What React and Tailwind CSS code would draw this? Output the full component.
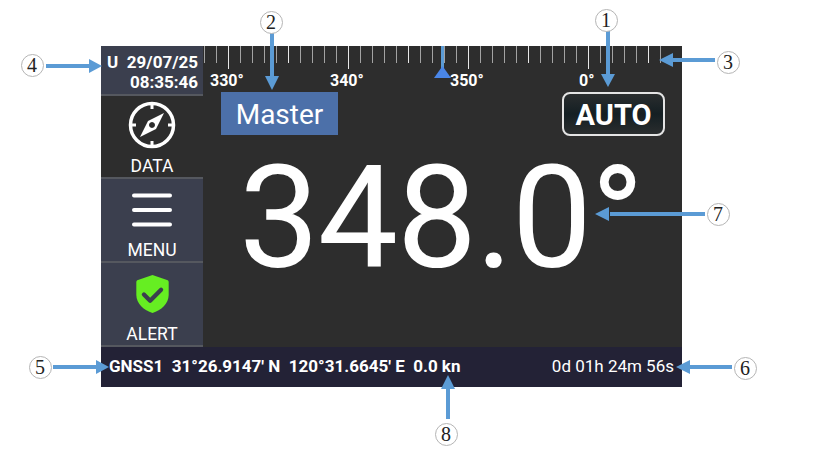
const ticks = Array.from({ length: 39 }, (_, i) => 204 + i * 12 - 203);

const scaleLabels = [
  { text: "330°", left: 7 },
  { text: "340°", left: 127 },
  { text: "350°", left: 247 },
  { text: "0°", left: 376 },
];

function Ruler() {
  return (
    <div className="relative h-[46px] shrink-0">
      <svg width="479" height="46" className="absolute left-0 top-0">
        {ticks.map((x, i) => {
          const major = (i - 2) % 10 === 0;
          const mid = (i - 2) % 5 === 0;
          return (
            <line
              key={x}
              x1={x + 0.5}
              x2={x + 0.5}
              y1="0"
              y2={major ? 23 : 17}
              stroke={major || mid ? "#e8e8e8" : "#a3a3a3"}
              strokeWidth="1"
            />
          );
        })}
        <line x1="239.5" x2="239.5" y1="0" y2="24" stroke="#5b9bd5" strokeWidth="3" />
        <path d="M239.5 20 L248 32 L231 32 Z" fill="#4a86e8" />
      </svg>
      {scaleLabels.map((l) => (
        <span
          key={l.text}
          className="absolute top-[25px] text-[16px] leading-[20px] font-bold text-white"
          style={{ left: l.left }}
        >
          {l.text}
        </span>
      ))}
    </div>
  );
}

function NavItem({ label, children, className, iconBox = "h-[60px]" }) {
  return (
    <div className={`${className} flex flex-col items-center border-b-2 border-[#55585f]`}>
      <div className={`${iconBox} w-full flex items-center justify-center`}>{children}</div>
      <span className="text-[17.5px] leading-[20px] text-white">{label}</span>
    </div>
  );
}

function Callout({ n, x, y }) {
  return (
    <div
      className="absolute w-[23px] h-[23px] rounded-full border border-[#b5b5b5] bg-white flex items-center justify-center text-[20px] leading-none text-[#222]"
      style={{ left: x - 11.5, top: y - 11.5, fontFamily: '"Liberation Serif", serif' }}
    >
      {n}
    </div>
  );
}

function Arrows() {
  const blue = "#5b9bd5";
  return (
    <svg width="815" height="459" className="absolute left-0 top-0 pointer-events-none">
      <g stroke={blue} strokeWidth="4">
        <line x1="46" y1="66" x2="92" y2="66" />
        <line x1="272" y1="33" x2="272" y2="78" />
        <line x1="608" y1="31" x2="608" y2="76" />
        <line x1="715" y1="60" x2="672" y2="60" />
        <line x1="53" y1="367" x2="98" y2="367" />
        <line x1="732" y1="367" x2="688" y2="367" />
        <line x1="610" y1="214" x2="705" y2="214" />
        <line x1="448" y1="419" x2="448" y2="384" />
      </g>
      <g fill={blue}>
        <path d="M102 66 L89 59 L89 73 Z" />
        <path d="M272 90 L265 76 L279 76 Z" />
        <path d="M608 87 L601 74 L615 74 Z" />
        <path d="M659 60 L673 53 L673 67 Z" />
        <path d="M109 367 L96 360 L96 374 Z" />
        <path d="M676 367 L690 360 L690 374 Z" />
        <path d="M595 214 L609 207 L609 221 Z" />
        <path d="M448 375 L441 389 L455 389 Z" />
      </g>
    </svg>
  );
}

export default function App() {
  return (
    <div
      className="relative w-[815px] h-[459px] bg-white overflow-hidden pl-[101px] pt-[46px]"
      style={{ fontFamily: 'Roboto, "Liberation Sans", sans-serif' }}
    >
      <div className="w-[581px] h-[341px] flex flex-col bg-[#2d2d2d]">
        <div className="flex h-[301px]">
          {/* sidebar */}
          <aside className="w-[102px] shrink-0 flex flex-col">
            <div className="h-[50px] bg-[#3b3f4e] border-b-2 border-[#55585f] pl-[6px] pr-[5px] pt-[6px] text-white font-bold text-[17px] leading-[20px]">
              <div className="flex justify-between">
                <span>U</span>
                <span>29/07/25</span>
              </div>
              <div className="text-right">08:35:46</div>
            </div>
            <NavItem label="DATA" className="h-[83px]">
              <svg width="48" height="48" viewBox="0 0 48 48" fill="none" className="mb-[3px]">
                <circle cx="24" cy="24" r="21.5" stroke="#fff" strokeWidth="3.5" />
                <path d="M24 3v5M24 40v5M3 24h5M40 24h5" stroke="#fff" strokeWidth="3" />
                <path
                  fillRule="evenodd"
                  d="M36 12 L28 28 L12 36 L20 20 Z M24 21 a3 3 0 1 0 0.01 0 Z"
                  fill="#fff"
                />
              </svg>
            </NavItem>
            <NavItem label="MENU" className="h-[84px] bg-[#3b3f4e]" iconBox="h-[61px]">
              <svg width="42" height="34" viewBox="0 0 42 34">
                <path d="M3 2.5h36M3 17h36M3 31.5h36" stroke="#fff" strokeWidth="4" strokeLinecap="round" />
              </svg>
            </NavItem>
            <NavItem label="ALERT" className="h-[84px] bg-[#3b3f4e]" iconBox="h-[61px]">
              <svg width="35" height="40" viewBox="0 0 36 42">
                <path
                  d="M18 1 L34 6.5 Q35 7 35 8.5 V22 C35 31 27 38 18 41 C9 38 1 31 1 22 V8.5 Q1 7 2 6.5 Z"
                  fill="#66ee22"
                />
                <path d="M9 21.5 L15.5 28 L27 16.5" fill="none" stroke="#3b3f4e" strokeWidth="4.5" strokeLinecap="round" strokeLinejoin="round" />
              </svg>
            </NavItem>
          </aside>

          {/* heading display */}
          <main className="flex-1 flex flex-col">
            <Ruler />
            <div className="flex items-start justify-between pl-[18px] pr-[17px]">
              <div className="w-[117px] h-[43px] bg-[#4c70a9] flex items-center justify-center text-[28px] pt-[3px] text-white">
                Master
              </div>
              <div className="w-[103px] h-[44px] rounded-[8px] border-2 border-[#e4e4e4] bg-linear-to-b from-[#2a2d2e] via-[#141f23] to-[#2a2d2e] flex items-center justify-center text-[29px] pt-[3px] font-bold text-white">
                AUTO
              </div>
            </div>
            <div className="pl-[36px] mt-[30px] text-[143px] leading-[104px] tracking-[-1.5px] text-white whitespace-nowrap">
              348.0°
            </div>
          </main>
        </div>

        {/* status bar */}
        <div className="h-[40px] bg-[#232236] flex items-center justify-between pl-[8px] pr-[8px] text-white text-[17px]">
          <div className="flex gap-[8.5px] font-bold">
            <span>GNSS1</span>
            <span>31°26.9147' N</span>
            <span>120°31.6645' E</span>
            <span>0.0 kn</span>
          </div>
          <span>0d 01h 24m 56s</span>
        </div>
      </div>

      <Arrows />
      <Callout n="1" x={606} y={20} />
      <Callout n="2" x={271} y={22} />
      <Callout n="3" x={728} y={62} />
      <Callout n="4" x={32} y={65} />
      <Callout n="5" x={40} y={367} />
      <Callout n="6" x={745} y={368} />
      <Callout n="7" x={718} y={214} />
      <Callout n="8" x={446} y={434} />
    </div>
  );
}
